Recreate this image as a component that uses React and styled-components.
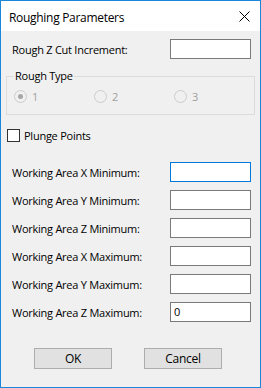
import React from 'react'
import styled, { createGlobalStyle } from 'styled-components'

const GlobalStyle = createGlobalStyle`
  html, body {
    margin: 0;
    padding: 0;
    background: #f0f0f0;
  }
  * {
    box-sizing: border-box;
  }
`

const Window = styled.div`
  width: 261px;
  height: 388px;
  border: 1px solid #1c86d8;
  display: flex;
  flex-direction: column;
  font-family: 'Open Sans', 'Noto Sans', sans-serif;
  font-size: 11px;
  letter-spacing: -0.25px;
  color: #000;
`

const TitleBar = styled.div`
  height: 30px;
  background: #fff;
  display: flex;
  align-items: center;
  justify-content: space-between;
  padding: 0 10px 0 8px;
`

const Title = styled.span`
  font-size: 12px;
  letter-spacing: -0.3px;
  margin-top: 2px;
`

const Body = styled.div`
  flex: 1;
  background: #f0f0f0;
  display: flex;
  flex-direction: column;
  padding: 8px 9px 0 0;
`

const Row = styled.div`
  display: flex;
  align-items: center;
  justify-content: space-between;
  height: 20px;
  padding-left: 11px;
  margin-top: ${p => p.$gap || 0}px;
`

const TextBox = styled.div`
  width: 81px;
  height: 20px;
  background: #fff;
  border: 1px solid ${p => (p.$focused ? '#0078d7' : '#7a7a7a')};
  padding: 1px 3px;
  line-height: 16px;
`

const Group = styled.div`
  position: relative;
  margin: 17px 0 0 5px;
  width: 249px;
  height: 39px;
  border: 1px solid #dcdcdc;
`

const Legend = styled.span`
  position: absolute;
  top: -9px;
  left: 7px;
  padding: 0 1px;
  background: #f0f0f0;
  line-height: 16px;
`

const RadioRow = styled.div`
  display: flex;
  padding: 12px 0 0 7px;
`

const RadioItem = styled.div`
  width: 80px;
  display: flex;
  align-items: center;
  gap: 5px;
  color: #a0a0a0;
`

const RadioCircle = styled.span`
  width: 13px;
  height: 13px;
  border-radius: 50%;
  border: 1px solid #cccccc;
  background: #f0f0f0;
  display: flex;
  align-items: center;
  justify-content: center;
  &::after {
    content: '';
    width: 5px;
    height: 5px;
    border-radius: 50%;
    background: ${p => (p.$checked ? '#a6a6a6' : 'transparent')};
  }
`

const CheckRow = styled.label`
  display: flex;
  align-items: center;
  gap: 4px;
  margin: 13px 0 0 6px;
  height: 14px;
`

const CheckBox = styled.span`
  width: 13px;
  height: 13px;
  border: 1px solid #333;
  background: #fff;
`

const Buttons = styled.div`
  display: flex;
  gap: 32px;
  margin: 26px 0 0 33px;
`

const Button = styled.div`
  width: 78px;
  height: 21px;
  background: #e1e1e1;
  border: 1px solid #adadad;
  display: flex;
  align-items: center;
  justify-content: center;
  font-size: 12px;
`

const Close = () => (
  <svg width="11" height="11" viewBox="0 0 11 11">
    <path d="M0.5 0.5 L10.5 10.5 M10.5 0.5 L0.5 10.5" stroke="#000" strokeWidth="1" fill="none" />
  </svg>
)

const areaRows = [
  ['Working Area X Minimum:', '', true],
  ['Working Area Y Minimum:', ''],
  ['Working Area Z Minimum:', ''],
  ['Working Area X Maximum:', ''],
  ['Working Area Y Maximum:', ''],
  ['Working Area Z Maximum:', '0']
]

export default function App() {
  return (
    <>
      <GlobalStyle />
      <Window>
        <TitleBar>
          <Title>Roughing Parameters</Title>
          <Close />
        </TitleBar>
        <Body>
          <Row>
            <span>Rough Z Cut Increment:</span>
            <TextBox />
          </Row>
          <Group>
            <Legend>Rough Type</Legend>
            <RadioRow>
              <RadioItem>
                <RadioCircle $checked />1
              </RadioItem>
              <RadioItem>
                <RadioCircle />2
              </RadioItem>
              <RadioItem>
                <RadioCircle />3
              </RadioItem>
            </RadioRow>
          </Group>
          <CheckRow>
            <CheckBox />
            Plunge Points
          </CheckRow>
          {areaRows.map(([label, value, focused], i) => (
            <Row key={label} $gap={i === 0 ? 20 : 8}>
              <span>{label}</span>
              <TextBox $focused={focused}>{value}</TextBox>
            </Row>
          ))}
          <Buttons>
            <Button>OK</Button>
            <Button>Cancel</Button>
          </Buttons>
        </Body>
      </Window>
    </>
  )
}
